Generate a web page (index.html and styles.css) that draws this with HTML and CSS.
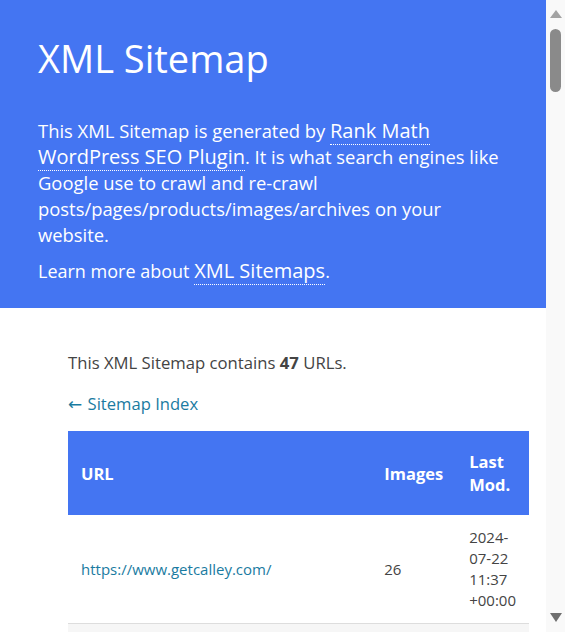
FILE: index.html
```html
<!DOCTYPE html>
<html lang="en">
<head>
<meta charset="utf-8">
<title>XML Sitemap</title>
<link rel="stylesheet" href="styles.css">
</head>
<body>
<header class="hero">
  <h1 class="hero-title">XML Sitemap</h1>
  <p class="hero-text">This XML Sitemap is generated by <a class="hero-link" href="#">Rank Math WordPress SEO Plugin</a>. It is what search engines like Google use to crawl and re-crawl posts/pages/products/images/archives on your website.</p>
  <p class="hero-text hero-more">Learn more about <a class="hero-link" href="#">XML Sitemaps</a>.</p>
</header>
<main class="content">
  <p class="count">This XML Sitemap contains <strong>47</strong> URLs.</p>
  <p class="back"><a class="link" href="#"><span class="arrow">&larr;</span> Sitemap Index</a></p>
  <table class="sitemap">
    <thead>
      <tr><th class="col-url">URL</th><th class="col-narrow">Images</th><th class="col-narrow">Last Mod.</th></tr>
    </thead>
    <tbody>
      <tr><td><a class="link" href="#">https://www.getcalley.com/</a></td><td>26</td><td>2024-07-22 11:37 +00:00</td></tr>
      <tr><td><a class="link" href="#">https://www.getcalley.com/features/</a></td><td>12</td><td>2024-07-20 09:12 +00:00</td></tr>
      <tr><td><a class="link" href="#">https://www.getcalley.com/pricing/</a></td><td>8</td><td>2024-07-18 10:05 +00:00</td></tr>
    </tbody>
  </table>
</main>
<div class="scrollbar" aria-hidden="true">
  <span class="sb-arrow sb-up"></span>
  <span class="sb-thumb"></span>
  <span class="sb-arrow sb-down"></span>
</div>
</body>
</html>
```
FILE: styles.css
```css
html, body {
  margin: 0;
  padding: 0;
}
html {
  overflow: hidden;
}
body {
  margin-right: 19px;
  font-family: "Open Sans", "Noto Sans", sans-serif;
  color: #444;
  background: #fff;
}
.hero {
  background: #4475f2;
  color: #fff;
  padding: 37px 38px 24px;
}
.hero-title {
  margin: 0;
  font-size: 38px;
  font-weight: 400;
  line-height: 43px;
}
.hero-text {
  margin: 38px 0 0;
  font-size: 18.4px;
  line-height: 26px;
}
.hero-more {
  margin-top: 10px;
  font-size: 18px;
}
.hero-link {
  color: #fff;
  font-size: 20px;
  line-height: 1;
  text-decoration: none;
  border-bottom: 1px dotted #fff;
}
.content {
  padding: 43px 17px 40px 68px;
  font-size: 16px;
  line-height: 24px;
}
.count {
  margin: 0;
  font-size: 16.7px;
}
.count strong {
  font-weight: 700;
}
.back {
  margin: 17px 0 15px;
  font-size: 16.6px;
}
.arrow {
  font-family: "DejaVu Sans", sans-serif;
  font-size: 17px;
  margin-right: 1px;
}
.link {
  color: #1a7ba1;
  text-decoration: none;
}
.sitemap {
  width: 100%;
  border-collapse: collapse;
}
.sitemap th {
  background: #4475f2;
  color: #fff;
  text-align: left;
  font-size: 16.5px;
  line-height: 23px;
  padding: 19px 13px;
  font-weight: 700;
}
.col-narrow {
  width: 1px;
}
.sitemap td {
  padding: 12px 13px;
  line-height: 21px;
  font-size: 15px;
  border-bottom: 1px solid #ddd;
}
.sitemap tbody tr:nth-child(even) td {
  background: #f6f6f6;
}
.scrollbar {
  position: fixed;
  top: 0;
  right: 0;
  width: 19px;
  height: 100vh;
  background: #f9f9f9;
  display: flex;
  flex-direction: column;
  align-items: center;
}
.sb-arrow {
  width: 0;
  height: 0;
  border-left: 6px solid transparent;
  border-right: 6px solid transparent;
}
.sb-up {
  margin-top: 10px;
  border-bottom: 8px solid #a3a3a3;
}
.sb-thumb {
  margin-top: 11px;
  width: 11px;
  height: 63px;
  border-radius: 6px;
  background: #8a8a8a;
}
.sb-down {
  margin-top: auto;
  margin-bottom: 10px;
  border-top: 9px solid #6f6f6f;
}
```
